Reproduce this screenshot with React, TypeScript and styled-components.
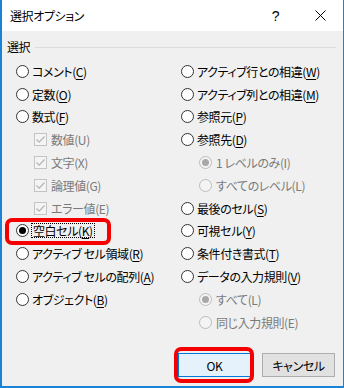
import React, { FC } from 'react';
import styled, { createGlobalStyle } from 'styled-components';

const GlobalStyle = createGlobalStyle`
  html, body {
    margin: 0;
    padding: 0;
  }

  body {
    font-family: 'Noto Sans CJK JP', 'Noto Sans', sans-serif;
    font-size: 12px;
    font-feature-settings: 'palt';
    letter-spacing: -0.4px;
    color: #000000;
  }
`;

const Window = styled.div`
  width: 344px;
  height: 388px;
  box-sizing: border-box;
  display: flex;
  flex-direction: column;
  background: #f0f0f0;
  border-left: 2px solid #1883d7;
  border-right: 1px solid #1883d7;
  border-bottom: 2px solid #1883d7;
`;

const TitleBar = styled.div`
  height: 31px;
  flex: none;
  display: flex;
  align-items: center;
  background: #ffffff;
  padding-left: 8px;
`;

const Title = styled.span`
  flex: 1;
  font-size: 12px;
`;

const CaptionButton = styled.span`
  width: 45px;
  height: 31px;
  display: flex;
  align-items: center;
  justify-content: center;
  font-family: 'Liberation Sans', sans-serif;
  font-size: 14px;
`;

const Body = styled.div`
  flex: 1;
  display: flex;
  flex-direction: column;
  padding: 8px 7px 9px 5px;
`;

const GroupHeader = styled.div`
  display: flex;
  align-items: center;
  gap: 5px;
  height: 16px;
  line-height: 16px;

  &::after {
    content: '';
    flex: 1;
    height: 1px;
    background: #dcdcdc;
  }
`;

const Columns = styled.div`
  margin-top: 5px;
  padding-left: 9px;
  display: grid;
  grid-template-columns: 165px 1fr;
`;

const Column = styled.div`
  display: flex;
  flex-direction: column;
`;

const Row = styled.div<{ $sub?: boolean; $disabled?: boolean; $highlight?: boolean }>`
  position: relative;
  height: 22.8px;
  display: flex;
  align-items: center;
  gap: ${(p) => (p.$sub ? '4px' : '3px')};
  padding-left: ${(p) => (p.$sub ? '18px' : '0')};
  color: ${(p) => (p.$disabled ? '#7a7a7a' : '#000000')};
  white-space: nowrap;

  ${(p) => p.$highlight && `
    &::after {
      content: '';
      position: absolute;
      left: -11px;
      top: -2px;
      width: 106px;
      height: 27px;
      box-sizing: border-box;
      border: 4px solid #f40000;
      border-radius: 7px;
    }
  `}
`;

const RadioMark = styled.span<{ $checked?: boolean; $disabled?: boolean }>`
  width: 13px;
  height: 13px;
  flex: none;
  box-sizing: border-box;
  border-radius: 50%;
  border: 1px solid ${(p) => (p.$disabled ? '#bcbcbc' : '#333333')};
  background: ${(p) => (p.$disabled ? '#f4f4f4' : '#ffffff')};
  display: flex;
  align-items: center;
  justify-content: center;

  &::after {
    content: '';
    display: ${(p) => (p.$checked ? 'block' : 'none')};
    width: 7px;
    height: 7px;
    border-radius: 50%;
    background: ${(p) => (p.$disabled ? '#a8a8a8' : '#000000')};
  }
`;

const CheckMark = styled.span`
  width: 13px;
  height: 13px;
  flex: none;
  box-sizing: border-box;
  border: 1px solid #c4c4c4;
  background: #f4f4f4;
  display: flex;
  align-items: center;
  justify-content: center;
`;

const Key = styled.span<{ $plain?: boolean }>`
  text-decoration: ${(p) => (p.$plain ? 'none' : 'underline')};
  text-underline-offset: 2px;
`;

const Focus = styled.span`
  outline: 1px dotted #000000;
  outline-offset: 0;
  padding: 0 1px;
  line-height: 13px;
`;

const Footer = styled.div`
  margin-top: auto;
  display: flex;
  justify-content: flex-end;
  gap: 11px;
  padding-right: 1px;
`;

const Button = styled.button<{ $default?: boolean; $highlight?: boolean }>`
  position: relative;
  width: 73px;
  height: 24px;
  padding: 0;
  font-family: inherit;
  font-size: 12px;
  font-feature-settings: 'palt';
  letter-spacing: -0.4px;
  color: #000000;
  background: ${(p) => (p.$default ? '#e5f1fb' : '#e1e1e1')};
  border: 1px solid ${(p) => (p.$default ? '#0078d7' : '#adadad')};

  ${(p) => p.$highlight && `
    &::after {
      content: '';
      position: absolute;
      left: -5px;
      right: -4px;
      top: -7px;
      bottom: -7px;
      box-sizing: border-box;
      border: 4px solid #f40000;
      border-radius: 7px;
    }
  `}
`;

const CloseIcon: FC = () => (
  <svg width="11" height="11" viewBox="0 0 11 11">
    <path d="M0.5 0.5 L10.5 10.5 M10.5 0.5 L0.5 10.5" stroke="#000" strokeWidth="1" fill="none" />
  </svg>
);

const Check: FC = () => (
  <svg width="11" height="11" viewBox="0 0 11 11">
    <path d="M1.5 5.5 L4.2 8.2 L9.5 2.5" stroke="#b4b4b4" strokeWidth="1.2" fill="none" />
  </svg>
);

type Item = {
  label: string;
  key: string;
  kind?: 'radio' | 'check';
  sub?: boolean;
  disabled?: boolean;
  checked?: boolean;
  focus?: boolean;
  highlight?: boolean;
};

const leftItems: Item[] = [
  { label: 'コメント', key: 'C' },
  { label: '定数', key: 'O' },
  { label: '数式', key: 'F' },
  { label: '数値', key: 'U', kind: 'check', sub: true, disabled: true, checked: true },
  { label: '文字', key: 'X', kind: 'check', sub: true, disabled: true, checked: true },
  { label: '論理値', key: 'G', kind: 'check', sub: true, disabled: true, checked: true },
  { label: 'エラー値', key: 'E', kind: 'check', sub: true, disabled: true, checked: true },
  { label: '空白セル', key: 'K', checked: true, focus: true, highlight: true },
  { label: 'アクティブ セル領域', key: 'R' },
  { label: 'アクティブ セルの配列', key: 'A' },
  { label: 'オブジェクト', key: 'B' },
];

const rightItems: Item[] = [
  { label: 'アクティブ行との相違', key: 'W' },
  { label: 'アクティブ列との相違', key: 'M' },
  { label: '参照元', key: 'P' },
  { label: '参照先', key: 'D' },
  { label: '1 レベルのみ', key: 'I', sub: true, disabled: true, checked: true },
  { label: 'すべてのレベル', key: 'L', sub: true, disabled: true },
  { label: '最後のセル', key: 'S' },
  { label: '可視セル', key: 'Y' },
  { label: '条件付き書式', key: 'T' },
  { label: 'データの入力規則', key: 'V' },
  { label: 'すべて', key: 'L', sub: true, disabled: true, checked: true },
  { label: '同じ入力規則', key: 'E', sub: true, disabled: true },
];

const Option: FC<{ item: Item }> = ({ item }) => {
  const text = (
    <span>
      {item.label}(
      <Key $plain={item.disabled}>{item.key}</Key>
      )
    </span>
  );
  return (
    <Row $sub={item.sub} $disabled={item.disabled} $highlight={item.highlight}>
      {item.kind === 'check' ? (
        <CheckMark>{item.checked && <Check />}</CheckMark>
      ) : (
        <RadioMark $checked={item.checked} $disabled={item.disabled} />
      )}
      {item.focus ? <Focus>{text}</Focus> : text}
    </Row>
  );
};

const App: FC = () => (
  <>
    <GlobalStyle />
    <Window>
      <TitleBar>
        <Title>選択オプション</Title>
        <CaptionButton>?</CaptionButton>
        <CaptionButton>
          <CloseIcon />
        </CaptionButton>
      </TitleBar>
      <Body>
        <GroupHeader>選択</GroupHeader>
        <Columns>
          <Column>
            {leftItems.map((item) => (
              <Option key={item.label} item={item} />
            ))}
          </Column>
          <Column>
            {rightItems.map((item) => (
              <Option key={item.label} item={item} />
            ))}
          </Column>
        </Columns>
        <Footer>
          <Button $default $highlight>OK</Button>
          <Button>キャンセル</Button>
        </Footer>
      </Body>
    </Window>
  </>
);

export default App;
